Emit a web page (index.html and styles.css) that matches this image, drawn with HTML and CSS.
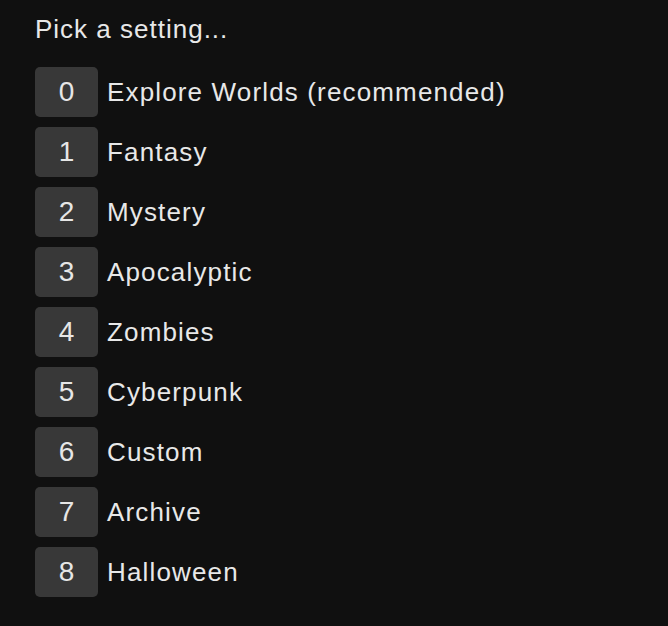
FILE: index.html
```html
<!DOCTYPE html>
<html>
<head>
<meta charset="utf-8">
<link rel="stylesheet" href="styles.css">
</head>
<body>
<main class="menu">
  <h1 class="title">Pick a setting...</h1>
  <ul class="options">
    <li class="option"><span class="key">0</span><span class="label">Explore Worlds (recommended)</span></li>
    <li class="option"><span class="key">1</span><span class="label">Fantasy</span></li>
    <li class="option"><span class="key">2</span><span class="label">Mystery</span></li>
    <li class="option"><span class="key">3</span><span class="label">Apocalyptic</span></li>
    <li class="option"><span class="key">4</span><span class="label">Zombies</span></li>
    <li class="option"><span class="key">5</span><span class="label">Cyberpunk</span></li>
    <li class="option"><span class="key">6</span><span class="label">Custom</span></li>
    <li class="option"><span class="key">7</span><span class="label">Archive</span></li>
    <li class="option"><span class="key">8</span><span class="label">Halloween</span></li>
  </ul>
</main>
</body>
</html>
```
FILE: styles.css
```css
html, body {
  margin: 0;
  padding: 0;
  background: #101010;
  height: 100%;
}
body {
  font-family: "Liberation Sans", Arial, sans-serif;
  color: #e8e8e8;
}
.menu {
  padding: 14px 0 0 35px;
}
.title {
  margin: 0;
  font-size: 26px;
  font-weight: normal;
  letter-spacing: 1px;
  line-height: 30px;
  color: #e8e8e8;
}
.options {
  list-style: none;
  margin: 23px 0 0 0;
  padding: 0;
  display: flex;
  flex-direction: column;
  gap: 10px;
}
.option {
  display: flex;
  align-items: center;
  gap: 9px;
  height: 50px;
}
.key {
  width: 63px;
  height: 50px;
  border-radius: 5px;
  background: #383838;
  display: flex;
  align-items: center;
  justify-content: center;
  font-size: 28px;
  color: #e6e6e6;
}
.label {
  font-size: 26px;
  letter-spacing: 1.15px;
  line-height: 30px;
}
```
